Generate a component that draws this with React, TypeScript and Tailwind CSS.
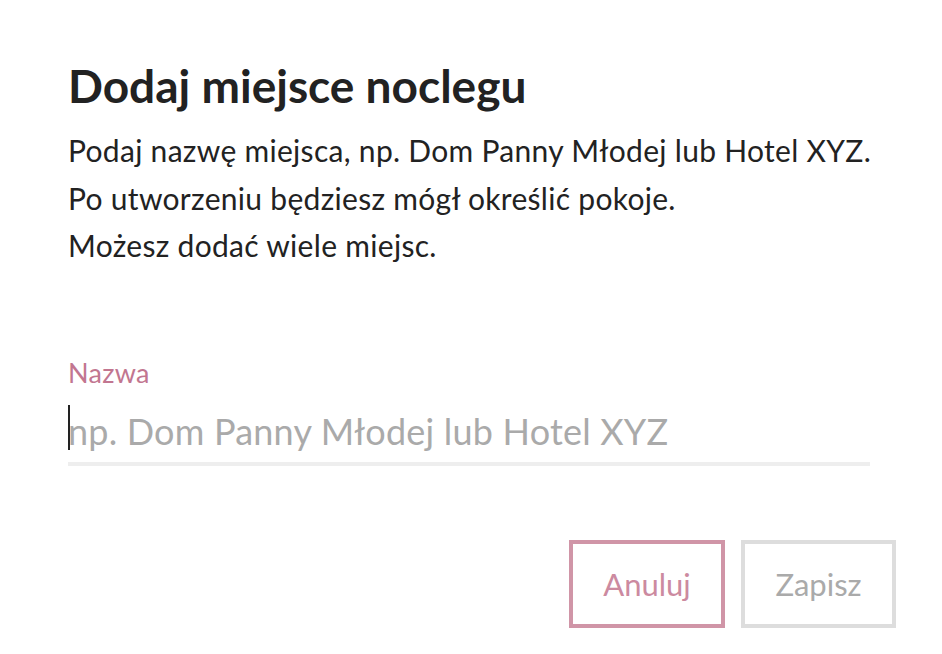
export default function App() {
  return (
    <div className="w-[942px] h-[654px] bg-white text-[#222222]" style={{ fontFamily: "Lato, 'Noto Sans', sans-serif" }}>
      <div className="pl-[68px] pr-[46px] pt-[58px]">
        <h1 className="text-[46px] font-bold leading-[56px]">Dodaj miejsce noclegu</h1>
        <div className="mt-[13px] text-[30px] leading-[47.5px] tracking-[0.3px]">
          <p>Podaj nazwę miejsca, np. Dom Panny Młodej lub Hotel XYZ.</p>
          <p>Po utworzeniu będziesz mógł określić pokoje.</p>
          <p>Możesz dodać wiele miejsc.</p>
        </div>
        <div className="mt-[88.5px] w-[802px]">
          <label className="block text-[27px] leading-[30px] tracking-[0.3px] text-[#c27690]">Nazwa</label>
          <div className="relative mt-[12px] pt-[9px] pb-[9px] border-b-4 border-[#eeeeee]">
            <div className="absolute left-0 top-[5px] w-[2px] h-[45px] bg-[#222222]" />
            <input
              className="block w-full h-[44px] p-0 bg-transparent outline-none text-[36px] leading-[44px] tracking-[0.2px] text-[#222222] placeholder:text-[#aaaaaa]"
              placeholder="np. Dom Panny Młodej lub Hotel XYZ"
            />
          </div>
        </div>
        <div className="mt-[74px] flex justify-end gap-[16px]">
          <button className="w-[156px] h-[88px] border-4 border-[#d095a7] text-[31px] text-[#cc8aa0]">Anuluj</button>
          <button className="w-[155px] h-[88px] border-4 border-[#dddddd] text-[31px] text-[#aaaaaa]">Zapisz</button>
        </div>
      </div>
    </div>
  );
}
